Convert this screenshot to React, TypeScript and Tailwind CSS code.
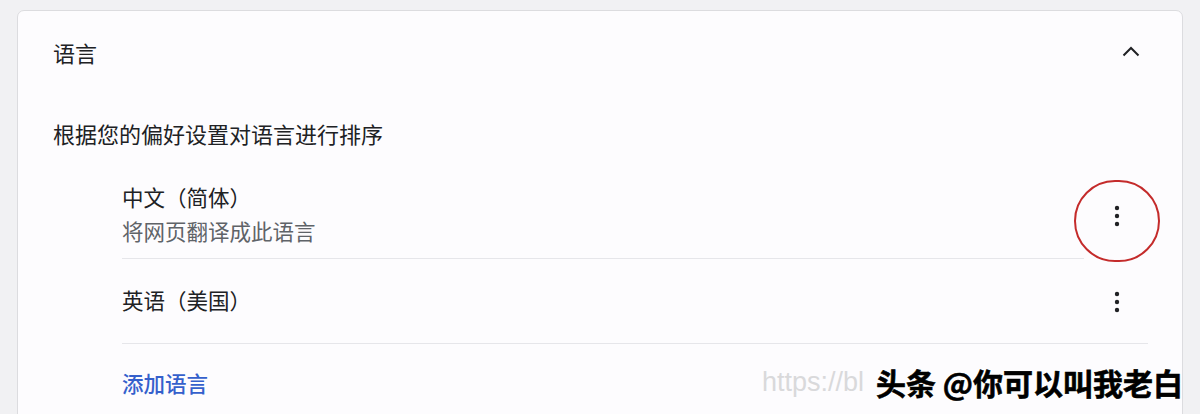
import React from "react";

const font = { fontFamily: '"Noto Sans CJK SC", "Noto Sans", sans-serif' };

function Dots() {
  return (
    <svg width="24" height="24" viewBox="0 0 24 24" fill="#202124">
      <circle cx="12" cy="4" r="2.2" />
      <circle cx="12" cy="12" r="2.2" />
      <circle cx="12" cy="20" r="2.2" />
    </svg>
  );
}

export default function App() {
  return (
    <div
      className="relative h-[414px] w-[1200px] overflow-hidden bg-[#f1f1f3] pl-[17px] pt-[10px]"
      style={font}
    >
      <div className="h-[460px] w-[1166px] rounded-[7px] border border-[#dcdcdf] bg-[#fdfcfe]">
        {/* header */}
        <div className="flex h-[82px] items-center justify-between pl-[35px] pr-[31px]">
          <span className="text-[22px] leading-[30px] text-[#202124]">语言</span>
          <button className="flex h-10 w-10 items-center justify-center">
            <svg width="20" height="20" viewBox="0 0 20 20" fill="none" stroke="#202124" strokeWidth="2">
              <path d="M2.5 13.5 L10 6 L17.5 13.5" />
            </svg>
          </button>
        </div>
        <div className="mt-[25px] pl-[35px] text-[22px] leading-[30px] text-[#202124]">
          根据您的偏好设置对语言进行排序
        </div>
        <div className="ml-[104px] mr-[34px] mt-[26px]">
          {/* row 1 */}
          <div className="relative flex h-[84px] items-center justify-between">
            <div className="mb-[4px] flex flex-col">
              <span className="text-[21.5px] leading-[34px] text-[#202124]">中文（简体）</span>
              <span className="text-[21.5px] leading-[34px] text-[#5f6368]">将网页翻译成此语言</span>
            </div>
            <button className="relative mr-[11px] flex h-10 w-10 items-center justify-center">
              <Dots />
              <span className="absolute left-[-23px] top-[-16px] h-[82px] w-[86px] rounded-full border-2 border-[#c42b2b]" />
            </button>
          </div>
          <div className="mr-[64px] h-px bg-[#e6e6ea]" />
          {/* row 2 */}
          <div className="flex h-[84px] items-center justify-between">
            <span className="mb-[3px] text-[21.5px] leading-[34px] text-[#202124]">英语（美国）</span>
            <button className="mr-[11px] mt-[2px] flex h-10 w-10 items-center justify-center">
              <Dots />
            </button>
          </div>
          <div className="h-px bg-[#e6e6ea]" />
          <div className="flex h-[78px] items-center">
            <span className="text-[21.5px] font-medium leading-[30px] text-[#3560cc]">添加语言</span>
          </div>
        </div>
      </div>
      {/* watermark overlays */}
      <div
        className="absolute left-[762px] top-[364px] text-[27px] leading-[36px] text-[#d9d9db]"
        style={{ fontFamily: '"Liberation Sans", sans-serif', fontWeight: 300 }}
      >
        https://bl
      </div>
      <div
        className="absolute left-[876px] top-[363px] text-[30px] font-bold leading-[38px] text-black"
        style={{ WebkitTextStroke: "0.6px #000", textShadow: "1px 1px 0 #fff, -1px -1px 0 #fff, 1px -1px 0 #fff, -1px 1px 0 #fff" }}
      >
        头条 @你可以叫我老白
      </div>
    </div>
  );
}
